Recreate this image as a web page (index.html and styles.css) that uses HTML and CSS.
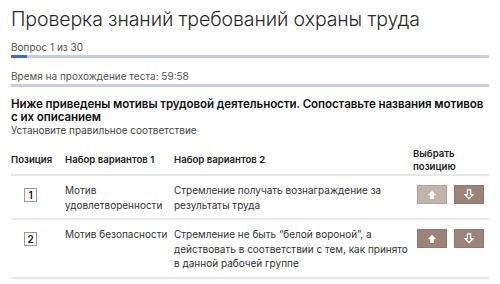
FILE: index.html
```html
<!DOCTYPE html>
<html lang="ru">
<head>
<meta charset="utf-8">
<link rel="stylesheet" href="styles.css">
</head>
<body>
<div class="page">
  <h1 class="title">Проверка знаний требований охраны труда</h1>
  <div class="meter">
    <div class="meter-label">Вопрос 1 из 30</div>
    <div class="bar"><div class="fill" style="width:16px"></div></div>
  </div>
  <div class="meter">
    <div class="meter-label">Время на прохождение теста: 59:58</div>
    <div class="bar"></div>
  </div>
  <h2 class="question">Ниже приведены мотивы трудовой деятельности. Сопоставьте названия мотивов с их описанием</h2>
  <div class="hint">Установите правильное соответствие</div>
  <table class="grid">
    <thead>
      <tr>
        <th class="c-pos">Позиция</th>
        <th class="c-a">Набор вариантов 1</th>
        <th class="c-b">Набор вариантов 2</th>
        <th class="c-act">Выбрать позицию</th>
      </tr>
    </thead>
    <tbody>
      <tr>
        <td class="c-pos"><span class="num">1</span></td>
        <td class="c-a">Мотив удовлетворенности</td>
        <td class="c-b">Стремление получать вознаграждение за результаты труда</td>
        <td class="c-act">
          <div class="btns">
            <button class="btn disabled"><svg width="10" height="10" viewBox="0 0 10 10"><path d="M5 0.8 L9.4 5.2 H6.8 V9 H3.2 V5.2 H0.6 Z" fill="#fff"/></svg></button>
            <button class="btn"><svg width="10" height="11" viewBox="0 0 10 11"><path d="M3.4 0.8 H6.6 V5.6 H9 L5 9.8 L1 5.6 H3.4 Z" fill="none" stroke="#fff" stroke-width="1.3" stroke-linejoin="miter"/></svg></button>
          </div>
        </td>
      </tr>
      <tr>
        <td class="c-pos"><span class="num">2</span></td>
        <td class="c-a">Мотив безопасности</td>
        <td class="c-b">Стремление не быть “белой вороной”, а действовать в соответствии с тем, как принято в данной рабочей группе</td>
        <td class="c-act">
          <div class="btns">
            <button class="btn"><svg width="10" height="10" viewBox="0 0 10 10"><path d="M5 0.8 L9.4 5.2 H6.8 V9 H3.2 V5.2 H0.6 Z" fill="#fff"/></svg></button>
            <button class="btn"><svg width="10" height="11" viewBox="0 0 10 11"><path d="M3.4 0.8 H6.6 V5.6 H9 L5 9.8 L1 5.6 H3.4 Z" fill="none" stroke="#fff" stroke-width="1.3" stroke-linejoin="miter"/></svg></button>
          </div>
        </td>
      </tr>
    </tbody>
  </table>
</div>
</body>
</html>
```
FILE: styles.css
```css
* { box-sizing: border-box; }
html, body { margin: 0; padding: 0; background: #fff; }
body {
  font-family: Inter, "Liberation Sans", sans-serif;
  color: #222;
}
.page { padding: 7px 11px 0 11px; }
.title {
  margin: 0;
  font-size: 19.5px;
  font-weight: 300;
  line-height: 24px;
  color: #2a2a2a;
  letter-spacing: -0.1px;
}
.meter { margin-top: 10px; }
.meter + .meter { margin-top: 12px; }
.meter-label {
  font-size: 10px;
  line-height: 13px;
  color: #555;
}
.bar {
  margin-top: 1px;
  height: 3px;
  background: #c6cdea;
}
.fill { height: 3px; background: #3d6bd8; }
.question {
  margin: 11px 0 0 0;
  font-size: 11.6px;
  font-weight: 600;
  line-height: 12.5px;
  color: #111;
  letter-spacing: -0.1px;
}
.hint {
  margin-top: 1px;
  font-size: 10px;
  line-height: 13px;
  color: #444;
}
.grid {
  width: 100%;
  margin-top: 8px;
  border-collapse: collapse;
  table-layout: fixed;
  font-size: 10px;
  line-height: 14.5px;
}
.grid th {
  text-align: left;
  font-weight: 600;
  font-size: 9.6px;
  color: #222;
  padding: 3px 0 1px 0;
  border-bottom: 2px solid #e6e6e6;
  vertical-align: middle;
  line-height: 12.5px;
}
.c-pos { width: 54px; }
.c-a { width: 109px; }
.c-b { width: 239px; }
.c-act { width: 76px; }
.grid td {
  vertical-align: top;
  padding: 7px 0 6px 0;
  border-bottom: 2px solid #e8e8e8;
  color: #333;
}
.grid td.c-b { padding-right: 0; }
.num {
  display: flex;
  align-items: center;
  justify-content: center;
  width: 13px;
  height: 14px;
  margin-left: 13px;
  margin-top: 5px;
  border: 1px solid #999;
  font-size: 10px;
  font-weight: 600;
  color: #111;
  line-height: 1;
}
.btns { display: flex; gap: 7px; padding-left: 4px; margin-top: 2px; }
.btn {
  width: 30px;
  height: 19px;
  border: 0;
  padding: 0;
  margin: 0;
  background: #9d8279;
  display: flex;
  align-items: center;
  justify-content: center;
  box-shadow: inset 0 0 0 1px rgba(0,0,0,0.08);
}
.btn.disabled { background: #c1b4ab; }
```
